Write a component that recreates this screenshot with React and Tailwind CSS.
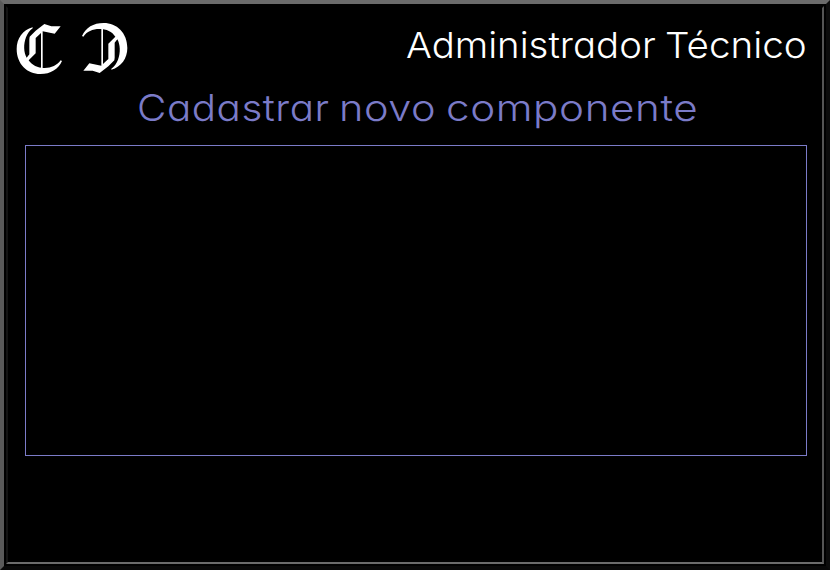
function Initial({ className }) {
  return (
    <svg viewBox="0 0 180 180" className={className} fill="#ffffff" aria-hidden="true">
      <path d="M68 28 C38 36 20 62 20 93 C20 139 52 168 91 168 C122 168 145 154 156 129 L152 127 C142 142 124 150 104 150 C82 150 66 142 56 127 L77 106 L77 60 L93 45 L93 150 L98 150 L98 40 L134 47 L152 25 L124 25 L103 18 L77 38 L59 56 L58 64 L58 109 L50 119 C41 103 40 79 48 58 C53 46 59 37 68 31 Z" />
    </svg>
  );
}

export default function App() {
  return (
    <div className="h-[570px] w-[830px] overflow-hidden border-4 border-t-[#6b6b6b] border-r-[#0c0c0c] border-b-[#080808] border-l-[#5a5a5a] bg-black p-0.5 font-['Inter','Liberation_Sans',sans-serif] font-light [font-feature-settings:'cv11'_1]">
      <div className="flex h-full flex-col border-2 border-t-black border-r-[#555555] border-b-[#6b6b6b] border-l-[#131313]">
        <header className="flex h-[74px] justify-between pt-2.5 pr-4 pl-0.5">
          <div className="flex gap-1">
            <Initial className="size-[60px]" />
            <Initial className="mt-px size-[60px] rotate-180" />
          </div>
          <h1 className="flex gap-[11px] pt-0.5 text-[36px] leading-[50px] whitespace-nowrap text-white">
            <span className="w-[248px] origin-left scale-x-[1.065]">Administrador</span>
            <span className="w-[141px] origin-left scale-x-[1.073]">Técnico</span>
          </h1>
        </header>
        <h2 className="flex h-[63px] gap-[12px] pt-px pl-[129px] text-[37px] leading-[50px] whitespace-nowrap text-[#7b7bc8]">
          <span className="w-[190px] origin-left scale-x-[1.09] tracking-[0.5px]">Cadastrar</span>
          <span className="w-[95px] origin-left scale-x-[1.12] tracking-[0.5px]">novo</span>
          <span className="w-[249px] origin-left scale-x-[1.14] tracking-[0.5px]">componente</span>
        </h2>
        <main className="ml-[17px] h-[311px] w-[782px] border border-[#7b7bc8]" />
      </div>
    </div>
  );
}
